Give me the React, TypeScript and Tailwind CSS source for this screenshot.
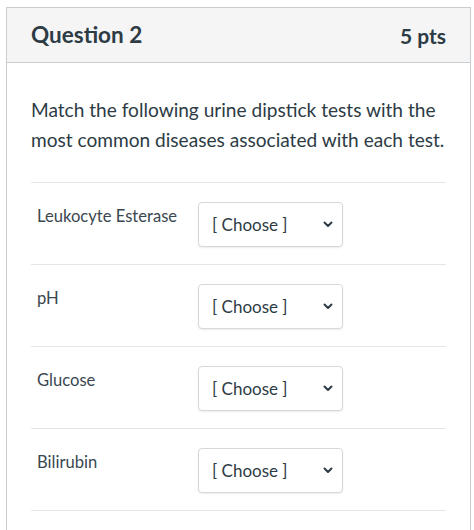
const ROWS = ["Leukocyte Esterase", "pH", "Glucose", "Bilirubin"];

function Chevron() {
  return (
    <svg width="10" height="7" viewBox="0 0 10 7" className="shrink-0">
      <path d="M1.5 1.5 L5 5 L8.5 1.5" fill="none" stroke="#2d3b45" strokeWidth="2" strokeLinecap="round" strokeLinejoin="round" />
    </svg>
  );
}

function ChooseSelect() {
  return (
    <div className="w-[145px] h-[45px] shrink-0 flex items-center justify-between pl-[13px] pr-[9px] border border-[#d6d9db] rounded-[4px] bg-white shadow-[0_1px_2px_rgba(0,0,0,0.08)]">
      <span className="text-[17px] text-[#2d3b45]">[ Choose ]</span>
      <Chevron />
    </div>
  );
}

export default function App() {
  return (
    <div className="w-[474px] h-[530px] overflow-hidden bg-white pt-[7px] pl-[6px]" style={{ fontFamily: "Lato, 'Noto Sans', sans-serif" }}>
      <div className="w-[465px] h-[540px] border border-[#c7cdd1] text-[#2d3b45]">
        {/* Header */}
        <div className="h-[55px] bg-[#f5f5f5] border-b border-[#c7cdd1] flex items-center justify-between pl-[24px] pr-[24px]">
          <h2 className="text-[22.5px] font-bold leading-none">Question 2</h2>
          <span className="text-[21px] font-bold leading-none">5 pts</span>
        </div>

        {/* Body */}
        <div className="px-[24px] pt-[32px]">
          <p className="text-[19.1px] leading-[30px]">
            Match the following urine dipstick tests with the most common diseases associated with each test.
          </p>

          <div className="mt-[27px] border-t border-[#e3e6e8]">
            {ROWS.map((label) => (
              <div key={label} className="flex items-start pt-[19px] pb-[17px] border-b border-[#e3e6e8]">
                <div className="w-[167px] pl-[6px] pt-[4px] text-[16.6px] leading-[20px] text-[#3a4750]">{label}</div>
                <ChooseSelect />
              </div>
            ))}
          </div>
        </div>
      </div>
    </div>
  );
}
